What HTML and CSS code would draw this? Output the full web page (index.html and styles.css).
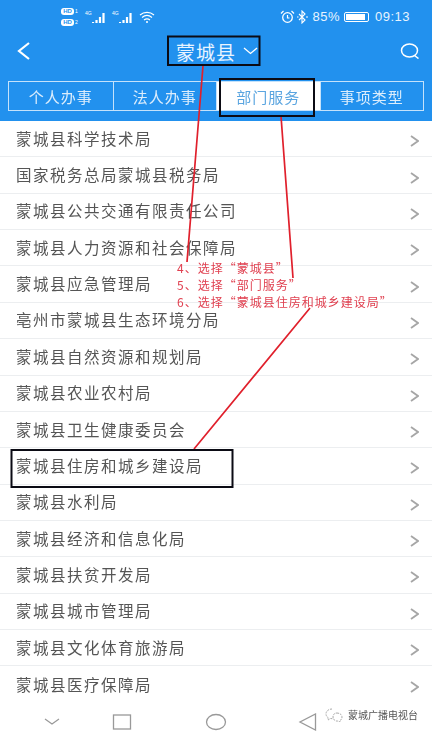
FILE: index.html
```html
<!DOCTYPE html>
<html lang="zh">
<head>
<meta charset="utf-8">
<title>蒙城县 部门服务</title>
<link rel="stylesheet" href="styles.css">
</head>
<body>
<div class="screen">
  <header class="top">
    <div class="status">
      <div class="status-left">
        <div class="hd"><span class="hd-row"><i class="hd-pill">HD</i><i class="hd-n">1</i></span><span class="hd-row"><i class="hd-pill">HD</i><i class="hd-n">2</i></span></div>
        <span class="net"><i class="net-t">4G</i><svg width="15" height="12" viewBox="0 0 15 12"><path d="M1 11v-1M4.500 11V8M8 11V5M11.500 11V1" stroke="#fff" stroke-width="2.200" fill="none"/></svg></span>
        <span class="net"><i class="net-t">4G</i><svg width="15" height="12" viewBox="0 0 15 12"><path d="M1 11v-1M4.500 11V8M8 11V5M11.500 11V1" stroke="#fff" stroke-width="2.200" fill="none"/></svg></span>
        <svg class="wifi" width="16" height="12" viewBox="0 0 16 12"><path d="M1 4c4-3.500 10-3.500 14 0M3 6.500c3-2.500 7-2.500 10 0M5 9c2-1.500 4-1.500 6 0" stroke="#fff" stroke-width="1.200" fill="none"/><circle cx="8" cy="11" r="1" fill="#fff"/></svg>
      </div>
      <div class="status-right">
        <svg width="15" height="14" viewBox="0 0 15 14"><circle cx="7.500" cy="7.500" r="4.800" stroke="#fff" stroke-width="1.300" fill="none"/><path d="M7.500 5v3h2M1 3.500 3.500 1M14 3.500 11.500 1" stroke="#fff" stroke-width="1.200" fill="none"/></svg>
        <svg width="11" height="14" viewBox="0 0 11 14"><path d="M2 4l6 6-3 3V1l3 3-6 6" stroke="#fff" stroke-width="1.100" fill="none"/><path d="M0 7h1.500M9 7h2" stroke="#fff" stroke-width="1"/></svg>
        <span class="pct">85%</span>
        <span class="battery"><i class="battery-fill"></i></span>
        <span class="clock">09:13</span>
      </div>
    </div>
    <div class="navbar">
      <svg class="back" width="16" height="20" viewBox="0 0 16 20"><path d="M13 2 3 10l10 8" stroke="#fff" stroke-width="2.200" fill="none"/></svg>
      <div class="title"><span>蒙城县</span><svg width="15" height="8" viewBox="0 0 15 8"><path d="M1 1l6.500 5.500L14 1" stroke="#fff" stroke-width="1.300" fill="none"/></svg></div>
      <svg class="search" width="20" height="16" viewBox="0 0 20 16"><ellipse cx="9.500" cy="7.500" rx="8" ry="6.500" stroke="#fff" stroke-width="1.500" fill="none"/><path d="M14.500 12.500l4 3" stroke="#fff" stroke-width="1.500"/></svg>
    </div>
    <nav class="tabs">
      <span class="tab">个人办事</span>
      <span class="tab">法人办事</span>
      <span class="tab active">部门服务</span>
      <span class="tab">事项类型</span>
    </nav>
  </header>
  <ul class="list">
    <li class="row"><span>蒙城县科学技术局</span><svg class="chev" width="9" height="12" viewBox="0 0 9 12"><path d="M1 1l7 5-7 5" stroke="#a6a6a6" stroke-width="1.800" fill="none"/></svg></li>
    <li class="row"><span>国家税务总局蒙城县税务局</span><svg class="chev" width="9" height="12" viewBox="0 0 9 12"><path d="M1 1l7 5-7 5" stroke="#a6a6a6" stroke-width="1.800" fill="none"/></svg></li>
    <li class="row"><span>蒙城县公共交通有限责任公司</span><svg class="chev" width="9" height="12" viewBox="0 0 9 12"><path d="M1 1l7 5-7 5" stroke="#a6a6a6" stroke-width="1.800" fill="none"/></svg></li>
    <li class="row"><span>蒙城县人力资源和社会保障局</span><svg class="chev" width="9" height="12" viewBox="0 0 9 12"><path d="M1 1l7 5-7 5" stroke="#a6a6a6" stroke-width="1.800" fill="none"/></svg></li>
    <li class="row"><span>蒙城县应急管理局</span><svg class="chev" width="9" height="12" viewBox="0 0 9 12"><path d="M1 1l7 5-7 5" stroke="#a6a6a6" stroke-width="1.800" fill="none"/></svg></li>
    <li class="row"><span>亳州市蒙城县生态环境分局</span><svg class="chev" width="9" height="12" viewBox="0 0 9 12"><path d="M1 1l7 5-7 5" stroke="#a6a6a6" stroke-width="1.800" fill="none"/></svg></li>
    <li class="row"><span>蒙城县自然资源和规划局</span><svg class="chev" width="9" height="12" viewBox="0 0 9 12"><path d="M1 1l7 5-7 5" stroke="#a6a6a6" stroke-width="1.800" fill="none"/></svg></li>
    <li class="row"><span>蒙城县农业农村局</span><svg class="chev" width="9" height="12" viewBox="0 0 9 12"><path d="M1 1l7 5-7 5" stroke="#a6a6a6" stroke-width="1.800" fill="none"/></svg></li>
    <li class="row"><span>蒙城县卫生健康委员会</span><svg class="chev" width="9" height="12" viewBox="0 0 9 12"><path d="M1 1l7 5-7 5" stroke="#a6a6a6" stroke-width="1.800" fill="none"/></svg></li>
    <li class="row"><span>蒙城县住房和城乡建设局</span><svg class="chev" width="9" height="12" viewBox="0 0 9 12"><path d="M1 1l7 5-7 5" stroke="#a6a6a6" stroke-width="1.800" fill="none"/></svg></li>
    <li class="row"><span>蒙城县水利局</span><svg class="chev" width="9" height="12" viewBox="0 0 9 12"><path d="M1 1l7 5-7 5" stroke="#a6a6a6" stroke-width="1.800" fill="none"/></svg></li>
    <li class="row"><span>蒙城县经济和信息化局</span><svg class="chev" width="9" height="12" viewBox="0 0 9 12"><path d="M1 1l7 5-7 5" stroke="#a6a6a6" stroke-width="1.800" fill="none"/></svg></li>
    <li class="row"><span>蒙城县扶贫开发局</span><svg class="chev" width="9" height="12" viewBox="0 0 9 12"><path d="M1 1l7 5-7 5" stroke="#a6a6a6" stroke-width="1.800" fill="none"/></svg></li>
    <li class="row"><span>蒙城县城市管理局</span><svg class="chev" width="9" height="12" viewBox="0 0 9 12"><path d="M1 1l7 5-7 5" stroke="#a6a6a6" stroke-width="1.800" fill="none"/></svg></li>
    <li class="row"><span>蒙城县文化体育旅游局</span><svg class="chev" width="9" height="12" viewBox="0 0 9 12"><path d="M1 1l7 5-7 5" stroke="#a6a6a6" stroke-width="1.800" fill="none"/></svg></li>
    <li class="row"><span>蒙城县医疗保障局</span><svg class="chev" width="9" height="12" viewBox="0 0 9 12"><path d="M1 1l7 5-7 5" stroke="#a6a6a6" stroke-width="1.800" fill="none"/></svg></li>
  </ul>
  <footer class="softkeys">
    <svg width="18" height="10" viewBox="0 0 18 10"><path d="M2 2l7 5 7-5" stroke="#999" stroke-width="1.200" fill="none"/></svg>
    <svg width="20" height="16" viewBox="0 0 20 16"><rect x="1.500" y="1" width="17" height="14" stroke="#999" stroke-width="1.300" fill="none"/></svg>
    <svg width="22" height="18" viewBox="0 0 22 18"><ellipse cx="11" cy="9" rx="9.500" ry="7.500" stroke="#999" stroke-width="1.300" fill="none"/></svg>
    <svg width="20" height="18" viewBox="0 0 20 18"><path d="M17.500 1v16L2 9z" stroke="#999" stroke-width="1.300" fill="none"/></svg>
  </footer>

  <svg class="marks" width="432" height="734" viewBox="0 0 432 734">
    <path d="M203 66 187 262M281 116 293 278M310 308 194 449" stroke="#e0202c" stroke-width="1.700" fill="none"/>
    <rect x="168" y="36.500" width="91.500" height="28.500" stroke="#0b0b14" stroke-width="2" fill="none"/>
    <rect x="220" y="79" width="94" height="37" stroke="#0b0b14" stroke-width="2" fill="none"/>
    <rect x="11.500" y="450" width="221" height="37" stroke="#0b0b14" stroke-width="2" fill="none"/>
  </svg>
  <div class="notes">
    <p>4、选择“蒙城县”</p>
    <p>5、选择“部门服务”</p>
    <p>6、选择“蒙城县住房和城乡建设局”</p>
  </div>
  <div class="watermark">
    <svg width="18" height="14" viewBox="0 0 18 14"><path d="M7 1C3 1 1 3.500 1 6c0 1.500 1 3 2 3.500L3 12l2.500-1.500c1 .2 2 .3 3 0M12 5c3 0 5 2 5 4s-1 3-2 3.500V14l-2-1c-2 .5-5-1-5-4s2-4 4-4z" stroke="#aaa" stroke-width="1" stroke-dasharray="2 1" fill="none"/></svg>
    <span>蒙城广播电视台</span>
  </div>
</div>
</body>
</html>
```
FILE: styles.css
```css
* { box-sizing: border-box; margin: 0; padding: 0; }
html, body { width: 432px; height: 734px; overflow: hidden; background: #fff; }
body { font-family: "Noto Sans CJK SC", "Liberation Sans", sans-serif; }
i { font-style: normal; }
.screen { position: relative; width: 432px; height: 734px; overflow: hidden; display: flex; flex-direction: column; filter: blur(.35px); }

.top { background: #2291ee; height: 121px; color: #fff; flex: none; display: flex; flex-direction: column; }
.status { height: 34px; padding: 0 22px 0 61px; display: flex; justify-content: space-between; align-items: center; }
.status-left { display: flex; align-items: center; gap: 5px; }
.hd { display: flex; flex-direction: column; gap: 4px; width: 19px; }
.hd-row { display: flex; gap: 1px; align-items: center; height: 7px; }
.hd-pill { background: #fff; color: #2291ee; font: bold 6px/7px "Liberation Sans", sans-serif; border-radius: 3px; padding: 0 1px; width: 13px; text-align: center; }
.hd-n { font: 5px/7px "Liberation Sans", sans-serif; }
.net { display: flex; align-items: flex-end; width: 22px; height: 14px; }
.net-t { font: 5px/7px "Liberation Sans", sans-serif; align-self: flex-start; }
.status-right { display: flex; align-items: center; gap: 2px; font: 13px/14px "Liberation Sans", sans-serif; letter-spacing: .5px; color: #e8f4ff; }
.pct { margin-left: 2px; }
.battery { width: 25px; height: 10px; margin: 0 4px 0 2px; border: 1px solid #fff; border-radius: 2px; padding: 1px 3px 1px 1px; }
.battery-fill { display: block; width: 100%; height: 100%; background: #fff; }

.navbar { height: 34px; padding: 0 12px 0 16px; display: flex; align-items: center; justify-content: space-between; }
.title { display: flex; align-items: center; gap: 7px; font-size: 19px; letter-spacing: 1px; margin-left: 2px; color: #e8f4ff; }

.tabs { margin: 13px 8px 0; height: 30px; display: grid; grid-template-columns: repeat(4, 1fr); border: 1px solid #c4e2fb; }
.tab { display: flex; align-items: center; justify-content: center; font-size: 15px; letter-spacing: 1px; color: #dcedfc; border-left: 1px solid #c4e2fb; }
.tab:first-child { border-left: 0; }
.tab.active { background: #fff; color: #5aa5e0; }

.list { list-style: none; flex: none; }
.row { height: 36.360px; padding: 0 13px 2px 16px; border-bottom: 1.500px solid #eceef0; display: flex; align-items: center; justify-content: space-between; font-size: 15.500px; letter-spacing: 1.500px; color: #555; }
.chev { margin-top: 7px; }
.row:last-child { border-bottom: 0; }

.softkeys { position: absolute; left: 0; right: 0; top: 704px; height: 30px; background: #fff; }
.softkeys svg { position: absolute; }
.softkeys svg:nth-child(1) { left: 43px; top: 13px; }
.softkeys svg:nth-child(2) { left: 112px; top: 10px; }
.softkeys svg:nth-child(3) { left: 205px; top: 9px; }
.softkeys svg:nth-child(4) { left: 298px; top: 9px; }

.marks { position: absolute; left: 0; top: 0; pointer-events: none; }
.notes { position: absolute; left: 177px; top: 259px; font-size: 12px; letter-spacing: 1px; line-height: 17px; color: #e04050; white-space: nowrap; }
.watermark { position: absolute; left: 325px; top: 707px; display: flex; align-items: center; gap: 5px; font-size: 10px; color: #555; white-space: nowrap; }
```
